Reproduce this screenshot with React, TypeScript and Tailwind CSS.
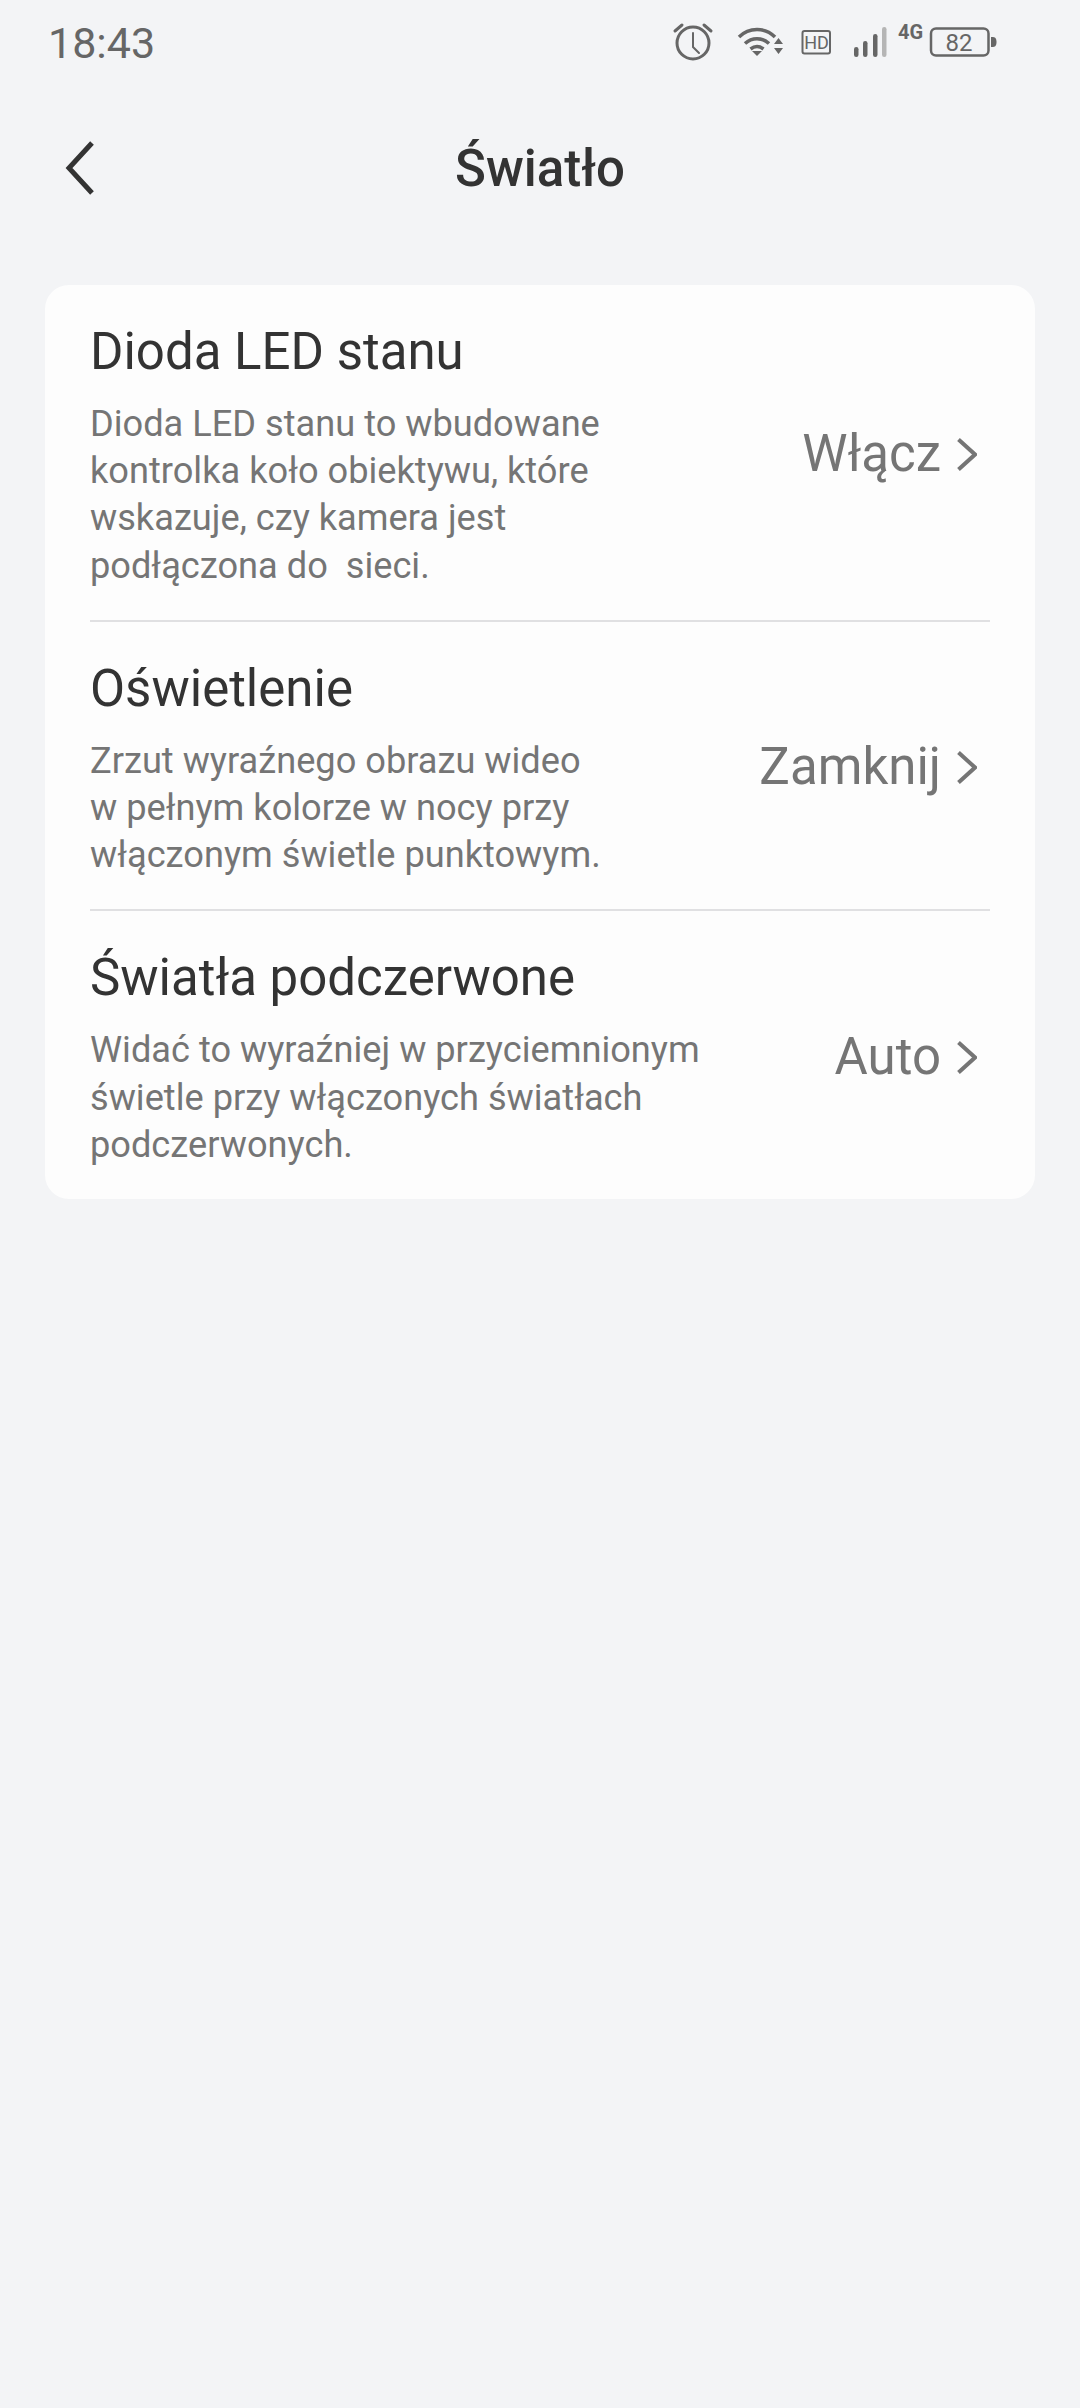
import React from 'react';

const rows = [
  {
    title: 'Dioda LED stanu',
    lines: ['Dioda LED stanu to wbudowane', 'kontrolka koło obiektywu, które', 'wskazuje, czy kamera jest', 'podłączona do\u00a0 sieci.'],
    value: 'Włącz',
  },
  {
    title: 'Oświetlenie',
    lines: ['Zrzut wyraźnego obrazu wideo', 'w pełnym kolorze w nocy przy', 'włączonym świetle punktowym.'],
    value: 'Zamknij',
  },
  {
    title: 'Światła podczerwone',
    lines: ['Widać to wyraźniej w przyciemnionym', 'świetle przy włączonych światłach', 'podczerwonych.'],
    value: 'Auto',
  },
];

// drawn in page coordinates, the box starts at x=660
const StatusIcons = () => (
  <svg width="340" height="86" viewBox="660 0 340 86" fill="none">
    {/* alarm */}
    <g stroke="#666" strokeWidth="3" strokeLinecap="round">
      <circle cx="693" cy="43" r="16" />
      <path d="M693 33v14l6 6" strokeWidth="2" />
      <path d="M675 31l7-6M711 31l-7-6" />
    </g>
    {/* wifi */}
    <g stroke="#666" strokeWidth="3.500">
      <path d="M739 37c10-10 26-10 36 0" />
      <path d="M745 43.500c7-6.500 17-6.500 24 0" />
      <path d="M750.500 49c4-3 9-3 13 0" />
    </g>
    <path d="M752 51h10l-5 5z" fill="#666" />
    <path d="M774 44l4.500-6 4.500 6zM774 48l4.500 6 4.500-6z" fill="#666" />
    {/* HD */}
    <rect x="802.500" y="31" width="27.500" height="22.500" rx="2" stroke="#666" strokeWidth="2" />
    <text x="816.500" y="48.500" textAnchor="middle" fontFamily="Roboto, sans-serif" fontSize="18" fill="#666">HD</text>
    {/* signal */}
    <rect x="854" y="47" width="4.500" height="10" rx="2.200" fill="#666" />
    <rect x="863" y="41" width="4.500" height="16" rx="2.200" fill="#666" />
    <rect x="873" y="34" width="4.500" height="23" rx="2.200" fill="#666" />
    <rect x="882" y="27" width="4.500" height="30" rx="2.200" fill="#b5b5b5" />
    {/* 4G */}
    <text x="898" y="39" fontFamily="Roboto, sans-serif" fontWeight="700" fontSize="20" fill="#666">4G</text>
    {/* battery */}
    <rect x="931" y="28.500" width="57.500" height="27" rx="5" stroke="#666" strokeWidth="2.500" />
    <text x="959" y="50.500" textAnchor="middle" fontFamily="Roboto, sans-serif" fontSize="24" fill="#666">82</text>
    <path d="M991 37h2c3 0 3.500 3 3.500 5s-.5 5-3.500 5h-2z" fill="#666" />
  </svg>
);

export default function App() {
  return (
    <div className="w-[1080px] h-[2408px] bg-[#f3f4f6] font-['Roboto',sans-serif]">
      <div className="h-[86px] flex items-center justify-between pl-[48px] pr-[80px]">
        <span className="text-[43px] leading-none text-[#666666]">18:43</span>
        <StatusIcons />
      </div>

      <div className="relative h-[199px] pb-[34px] flex items-center justify-center">
        <svg width="36" height="56" viewBox="0 0 36 56" fill="none" className="absolute left-[62px] top-[54px]">
          <path d="M30 3L7 28l23 25" stroke="#333333" strokeWidth="5" />
        </svg>
        <h1 className="text-[51px] font-medium text-[#333333] leading-none">Światło</h1>
      </div>

      <div className="mx-[45px] bg-[#fdfdfd] rounded-[24px] px-[45px]">
        {rows.map((row, i) => (
          <div key={row.title} className={`flex items-center justify-between pt-[35px] pb-[31px] ${i < rows.length - 1 ? 'border-b-2 border-[#e0e0e2]' : ''}`}>
            <div>
              <div className="text-[51px] leading-[64px] text-[#333333]">{row.title}</div>
              <div className="mt-[16px] text-[36.200px] leading-[47.200px] text-[#757575]">
                {row.lines.map((l) => (
                  <div key={l}>{l}</div>
                ))}
              </div>
            </div>
            <div className="flex items-center gap-[16px] pr-[13px] text-[51px] text-[#757575]">
              <span>{row.value}</span>
              <svg width="20" height="33" viewBox="0 0 20 33" fill="none">
                <path d="M1.500 1.500L18 16.500 1.500 31.500" stroke="#757575" strokeWidth="4" />
              </svg>
            </div>
          </div>
        ))}
      </div>
    </div>
  );
}
